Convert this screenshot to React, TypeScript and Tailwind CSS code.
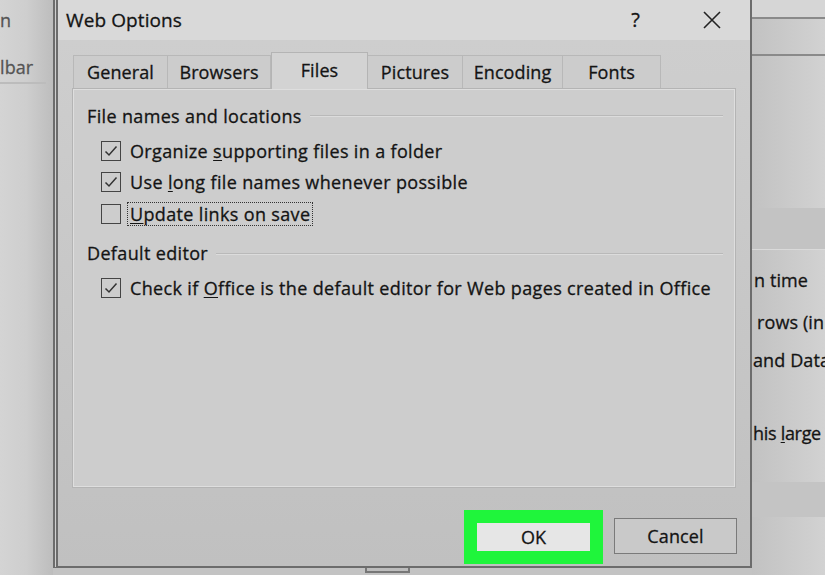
import React from 'react';

const FONT = { fontFamily: '"Open Sans", "Noto Sans", sans-serif' };

const TABS = [
  { label: 'General', w: 'w-[95px]' },
  { label: 'Browsers', w: 'w-[103px]' },
  { label: 'Files', w: 'w-[97px]', active: true },
  { label: 'Pictures', w: 'w-[95px]' },
  { label: 'Encoding', w: 'w-[100px]' },
  { label: 'Fonts', w: 'w-[98px]' },
];

function CheckBox({ checked }: { checked: boolean }) {
  return (
    <span className="w-[20px] h-[20px] border-[1.5px] border-[#444] flex items-center justify-center shrink-0">
      {checked && (
        <svg width="16" height="16" viewBox="0 0 16 16" fill="none">
          <path d="M2.5 8.5 L6 12 L13.5 3.5" stroke="#333" strokeWidth="1.5" />
        </svg>
      )}
    </span>
  );
}

function Option({ checked, children, focused = false }: { checked: boolean; children: React.ReactNode; focused?: boolean }) {
  return (
    <div className="flex items-center h-[31.5px] pl-[28px]">
      <CheckBox checked={checked} />
      <span
        className={`ml-[6px] px-[2px] leading-[22px] whitespace-nowrap ${focused ? 'border border-dotted border-[#333]' : 'border border-transparent'}`}
      >
        {children}
      </span>
    </div>
  );
}

function GroupTitle({ title }: { title: string }) {
  return (
    <div className="flex items-center gap-[8px] pl-[14px] pr-[12px] h-[26px]">
      <span className="whitespace-nowrap">{title}</span>
      <div className="flex-1 h-[2px] bg-[#b9b9b9] border-b border-[#dcdcdc]" />
    </div>
  );
}

export default function App() {
  return (
    <div
      className="w-[825px] h-[575px] flex overflow-hidden bg-[#cfcfcf] text-[#141414] tracking-[0.1px] [-webkit-text-stroke:0.3px]"
      style={FONT}
    >
      {/* background window, left */}
      <div className="w-[53px] shrink-0 bg-linear-to-r from-[#d4d4d4] via-[#cecece] to-[#bdbdbd] text-[#555] text-[18px]">
        <div className="h-[40px] pt-[7px]">n</div>
        <div className="h-[44px] pt-[14px] whitespace-nowrap border-b-2 border-[#bcbcbc] mr-[7px]">lbar</div>
      </div>

      {/* dialog */}
      <div className="w-[699px] shrink-0 flex flex-col">
        <div className="h-[568px] flex flex-col border-l-[5px] border-double border-r-2 border-b-2 border-[#6c6c6c]">
          {/* title bar */}
          <div className="h-[40px] bg-[#d9d9d9] flex items-center pl-[8px] pr-[28px] text-[19px]">
            <span className="flex-1">Web Options</span>
            <span className="mr-[62px] text-[20px]">?</span>
            <svg width="20" height="20" viewBox="0 0 20 20">
              <path d="M2 2 L18 18 M18 2 L2 18" stroke="#222" strokeWidth="1.6" />
            </svg>
          </div>

          {/* body */}
          <div className="flex-1 flex flex-col bg-linear-to-b from-[#cecece] to-[#c0c0c0] px-[14px] pb-[2px]">
            <div className="flex h-[48px] items-end pl-[1px] text-[18px]">
              {TABS.map((t) =>
                t.active ? (
                  <div
                    key={t.label}
                    className={`${t.w} h-[37px] -mb-[1px] relative z-10 bg-[#d3d3d3] border border-b-0 border-[#b4b4b4] flex items-center justify-center pb-[2px]`}
                  >
                    {t.label}
                  </div>
                ) : (
                  <div
                    key={t.label}
                    className={`${t.w} h-[33px] bg-[#cccccc] border border-l-0 first:border-l border-b-0 border-[#b8b8b8] flex items-center justify-center pt-[1px]`}
                  >
                    {t.label}
                  </div>
                )
              )}
            </div>

            {/* panel */}
            <div className="h-[400px] bg-[#cdcdcd] border border-[#b4b4b4] shadow-[inset_1px_1px_0_#dedede,inset_-1px_-1px_0_#dedede] text-[18px] tracking-[0.35px] pt-[14px]">
              <GroupTitle title="File names and locations" />
              <div className="pt-[6px]">
                <Option checked>
                  Organize <u className="underline-offset-2">s</u>upporting files in a folder
                </Option>
                <Option checked>
                  Use <u className="underline-offset-2">l</u>ong file names whenever possible
                </Option>
                <Option checked={false} focused>
                  <u className="underline-offset-2">U</u>pdate links on save
                </Option>
              </div>
              <div className="pt-[11px]">
                <GroupTitle title="Default editor" />
              </div>
              <div className="pt-[6px]">
                <Option checked>
                  Check if <u className="underline-offset-2">O</u>ffice is the default editor for Web pages created in Office
                </Option>
              </div>
            </div>

            {/* buttons */}
            <div className="flex-1 flex items-end justify-end gap-[11px] text-[18px]">
              <div className="w-[139px] h-[54px] bg-[#1ff53b] p-[13px]">
                <div className="w-full h-full bg-[#e6e6e6] flex items-center justify-center">OK</div>
              </div>
              <div className="w-[123px] h-[36px] mb-[10px] -mr-[1px] border-[1.5px] border-[#7a7a7a] bg-[#c9c9c9] flex items-center justify-center">
                Cancel
              </div>
            </div>
          </div>
        </div>
        <div className="flex-1 bg-[#c3c3c3] relative">
          <div className="absolute left-[312px] top-0 w-[45px] h-[5px] border-2 border-t-0 border-[#777] bg-[#bdbdbd]" />
        </div>
      </div>

      {/* background window, right */}
      <div className="flex-1 flex flex-col bg-linear-to-r from-[#c2c2c2] to-[#d2d2d2] text-[18px] overflow-hidden">
        <div className="h-[19px] bg-[#d6d6d6] border-b-2 border-[#8a8a8a]" />
        <div className="h-[37px] border-b-2 border-[#8a8a8a]" />
        <div className="h-[152px]" />
        <div className="h-[42px] bg-[#c3c3c3] border-b border-[#dadada]" />
        <div className="h-[42px] pt-[17px] pl-[2px] whitespace-nowrap">n time</div>
        <div className="h-[42px] pt-[17px] pl-[5px] whitespace-nowrap">rows (in</div>
        <div className="h-[40px] pt-[13px] pl-[1px] whitespace-nowrap">and Data</div>
        <div className="h-[40px]" />
        <div className="h-[36px] pt-[6px] pl-[1px] whitespace-nowrap tracking-[-0.3px]">
          his <u className="underline-offset-2">l</u>arge (
        </div>
        <div className="h-[35px] bg-[#c4c4c4] mt-[32px]" />
      </div>
    </div>
  );
}
